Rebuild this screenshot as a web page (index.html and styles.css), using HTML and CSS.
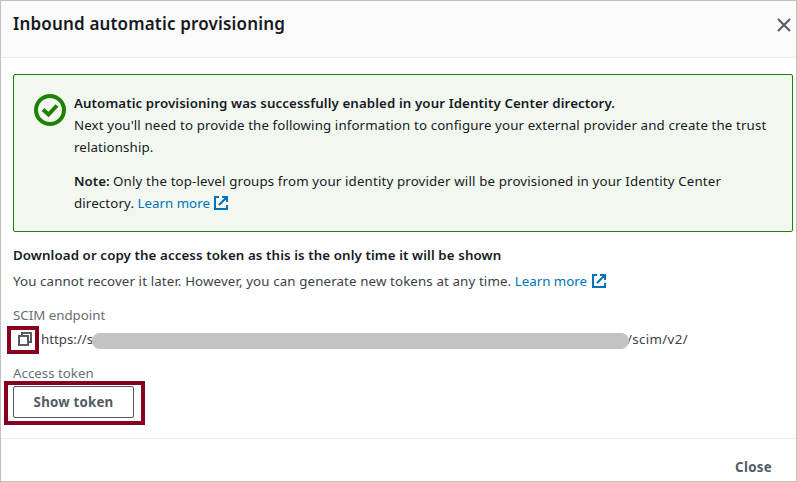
FILE: index.html
```html
<!DOCTYPE html>
<html lang="en">
<head>
<meta charset="utf-8">
<title>Inbound automatic provisioning</title>
<link rel="stylesheet" href="styles.css">
</head>
<body>
<svg width="0" height="0" class="defs" aria-hidden="true">
  <symbol id="external" viewBox="0 0 14 14">
    <path d="M5 1H1v12h12V9M8 1h5v5M12.5 1.5L5 9" fill="none" stroke="currentColor" stroke-width="2"/>
  </symbol>
</svg>
<div class="modal">
  <header class="header">
    <h1 class="title">Inbound automatic provisioning</h1>
    <button class="dismiss" aria-label="Dismiss">
      <svg width="14" height="14" viewBox="0 0 14 14"><path d="M1 1l12 12M13 1L1 13" fill="none" stroke="#545b64" stroke-width="2"/></svg>
    </button>
  </header>
  <main class="content">
    <section class="alert">
      <svg class="status" width="32" height="32" viewBox="0 0 32 32"><circle cx="16" cy="16" r="14" fill="none" stroke="#1d8102" stroke-width="4"/><path d="M9 15.5l5.5 5L23 11.5" fill="none" stroke="#1d8102" stroke-width="4"/></svg>
      <div class="message">
        <p><strong class="heading">Automatic provisioning was successfully enabled in your Identity Center directory.</strong><br><span class="body">Next you'll need to provide the following information to configure your external provider and create the trust<br>relationship.</span></p>
        <p class="note"><strong>Note:</strong> <span class="body-wide">Only the top-level groups from your identity provider will be provisioned in your Identity Center<br></span><span class="body">directory.</span> <a class="link">Learn more<svg class="ext" width="14" height="14"><use href="#external"/></svg></a></p>
      </div>
    </section>
    <h2 class="subtitle heading">Download or copy the access token as this is the only time it will be shown</h2>
    <p class="hint"><span class="body">You cannot recover it later. However, you can generate new tokens at any time.</span> <a class="link">Learn more<svg class="ext" width="14" height="14"><use href="#external"/></svg></a></p>
    <div class="label">SCIM endpoint</div>
    <div class="endpoint">
      <button class="copy" aria-label="Copy">
        <svg width="14" height="14" viewBox="0 0 14 14" fill="none" stroke="#545b64" stroke-width="2"><path d="M1 4h9v9H1zM4 4V1h9v9h-3"/></svg>
      </button>
      <span class="scheme">https://s</span><span class="mask"></span><span class="path">/scim/v2/</span>
    </div>
    <div class="label token-label">Access token</div>
    <div class="frame"><button class="show">Show token</button></div>
  </main>
  <footer class="footer"><button class="close">Close</button></footer>
</div>
</body>
</html>
```
FILE: styles.css
```css
* { box-sizing: border-box; }
body { margin: 0; font: 13.3px/22px "Noto Sans", "Open Sans", sans-serif; color: #16191f; }
h1, h2, p { margin: 0; }
strong { font-weight: 600; }
button { font: inherit; background: none; border: 0; padding: 0; }
svg { display: block; }
.defs { position: absolute; }
.modal { width: 797px; height: 482px; border: 1px solid #bfbfbf; background: #fff; display: flex; flex-direction: column; }
.header { height: 57px; flex: none; background: #fafafa; border-bottom: 1px solid #eaeded; padding: 12px 5px 0 12px; display: flex; justify-content: space-between; align-items: flex-start; }
.title { font-size: 17px; font-weight: 600; line-height: 22px; letter-spacing: .17px; white-space: nowrap; }
.dismiss { margin-top: 5px; }
.content { height: 380px; flex: none; padding: 16px 3px 0 12px; white-space: nowrap; }
.heading { letter-spacing: .1px; }
.body { letter-spacing: .125px; }
.body-wide { letter-spacing: .145px; }
.alert { width: 780px; height: 158px; border: 1px solid #1d8102; border-radius: 2px; background: #f2f8f0; padding: 17px 0 0 20px; display: flex; gap: 8px; }
.status { margin-top: 2px; flex: none; }
.note { margin-top: 12px; }
.link { color: #0073bb; }
.ext { display: inline-block; vertical-align: -2px; margin-left: 4.5px; }
.subtitle { font-size: inherit; font-weight: 600; line-height: 22px; margin-top: 12px; }
.hint { margin-top: 4px; color: #3b3f46; }
.label { color: #687078; margin-top: 12px; }
.endpoint { display: flex; align-items: center; height: 28px; margin-left: -6px; color: #3b3f46; }
.copy { width: 32px; height: 28px; border: 4px solid #870020; padding: 0 0 2px 7px; flex: none; }
.scheme { margin: -2px 0 0 2px; width: 51px; flex: none; }
.mask { width: 537px; height: 16px; border-radius: 8px; background: #c3c3c3; margin-top: 1px; flex: none; position: relative; }
.path { margin: -2px 0 0 -2px; letter-spacing: .35px; }
.token-label { margin-top: 8px; }
.frame { width: 141px; height: 44px; border: 4px solid #870020; margin: -3px 0 0 -9px; padding: 1px 0 0 5px; }
.show { width: 121px; height: 32px; border: 1px solid #545b64; border-radius: 2px; color: #545b64; font-weight: 700; letter-spacing: .2px; display: flex; align-items: center; justify-content: center; }
.footer { border-top: 1px solid #eaeded; flex: 1; display: flex; justify-content: flex-end; padding: 17px 24px 0 0; }
.close { height: 22px; color: #545b64; font-weight: 700; letter-spacing: .3px; }
```
